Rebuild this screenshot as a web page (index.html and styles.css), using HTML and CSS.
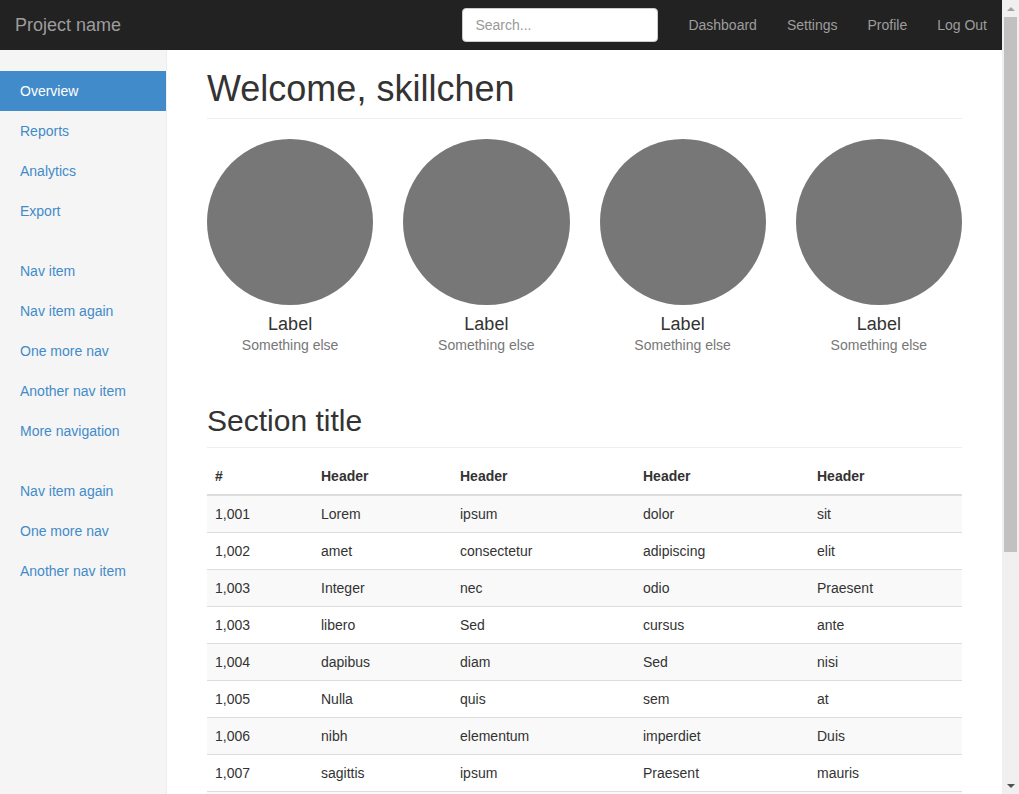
FILE: index.html
```html
<!DOCTYPE html>
<html lang="en">
<head>
<meta charset="utf-8">
<title>Dashboard</title>
<link rel="stylesheet" href="styles.css">
</head>
<body>
<div class="viewport">
<div class="page">
<header class="navbar">
  <a class="brand" href="#">Project name</a>
  <div class="spacer"></div>
  <form class="search-form"><input class="search" type="text" placeholder="Search..."></form>
  <nav class="topnav">
    <a href="#">Dashboard</a>
    <a href="#">Settings</a>
    <a href="#">Profile</a>
    <a href="#">Log Out</a>
  </nav>
</header>
<div class="layout">
  <aside class="sidebar">
    <ul class="side-nav">
      <li class="active"><a href="#">Overview</a></li>
      <li><a href="#">Reports</a></li>
      <li><a href="#">Analytics</a></li>
      <li><a href="#">Export</a></li>
    </ul>
    <ul class="side-nav">
      <li><a href="#">Nav item</a></li>
      <li><a href="#">Nav item again</a></li>
      <li><a href="#">One more nav</a></li>
      <li><a href="#">Another nav item</a></li>
      <li><a href="#">More navigation</a></li>
    </ul>
    <ul class="side-nav">
      <li><a href="#">Nav item again</a></li>
      <li><a href="#">One more nav</a></li>
      <li><a href="#">Another nav item</a></li>
    </ul>
  </aside>
  <main class="main">
    <h1 class="page-header">Welcome, skillchen</h1>
    <div class="placeholders">
      <div class="placeholder"><div class="circle"></div><h4>Label</h4><span class="muted">Something else</span></div>
      <div class="placeholder"><div class="circle"></div><h4>Label</h4><span class="muted">Something else</span></div>
      <div class="placeholder"><div class="circle"></div><h4>Label</h4><span class="muted">Something else</span></div>
      <div class="placeholder"><div class="circle"></div><h4>Label</h4><span class="muted">Something else</span></div>
    </div>
    <h2 class="sub-header">Section title</h2>
    <table class="table">
      <thead>
        <tr><th class="c1">#</th><th class="c2">Header</th><th class="c3">Header</th><th class="c4">Header</th><th class="c5">Header</th></tr>
      </thead>
      <tbody>
        <tr><td>1,001</td><td>Lorem</td><td>ipsum</td><td>dolor</td><td>sit</td></tr>
        <tr><td>1,002</td><td>amet</td><td>consectetur</td><td>adipiscing</td><td>elit</td></tr>
        <tr><td>1,003</td><td>Integer</td><td>nec</td><td>odio</td><td>Praesent</td></tr>
        <tr><td>1,003</td><td>libero</td><td>Sed</td><td>cursus</td><td>ante</td></tr>
        <tr><td>1,004</td><td>dapibus</td><td>diam</td><td>Sed</td><td>nisi</td></tr>
        <tr><td>1,005</td><td>Nulla</td><td>quis</td><td>sem</td><td>at</td></tr>
        <tr><td>1,006</td><td>nibh</td><td>elementum</td><td>imperdiet</td><td>Duis</td></tr>
        <tr><td>1,007</td><td>sagittis</td><td>ipsum</td><td>Praesent</td><td>mauris</td></tr>
        <tr class="empty"><td></td><td></td><td></td><td></td><td></td></tr>
      </tbody>
    </table>
  </main>
</div>
</div>
<div class="scrollbar">
  <div class="sb-arrow sb-up"></div>
  <div class="sb-track"><div class="sb-thumb"></div></div>
  <div class="sb-arrow sb-down"></div>
</div>
</div>
</body>
</html>
```
FILE: styles.css
```css
* { box-sizing: border-box; }
html, body { margin: 0; padding: 0; }
body {
  font-family: "Liberation Sans", Arial, sans-serif;
  font-size: 14px;
  line-height: 20px;
  color: #333;
  background: #fff;
  overflow: hidden;
}
a { text-decoration: none; }

.viewport {
  display: flex;
  height: 794px;
  overflow: hidden;
}
.page {
  flex: 1;
  min-width: 0;
  height: 794px;
  overflow: hidden;
  display: flex;
  flex-direction: column;
}

.navbar {
  height: 50px;
  flex: none;
  background: #222;
  display: flex;
  align-items: flex-start;
}
.brand {
  display: block;
  padding: 15px 15px;
  font-size: 18px;
  line-height: 20px;
  color: #9d9d9d;
}
.spacer { flex: 1; }
.search-form { margin: 8px 15px 0 0; }
.search {
  display: block;
  width: 196px;
  height: 34px;
  padding: 6px 12px;
  font-family: "Liberation Sans", Arial, sans-serif;
  font-size: 14px;
  color: #555;
  background: #fff;
  border: 1px solid #ccc;
  border-radius: 4px;
  outline: none;
}
.search::placeholder { color: #999; }
.topnav { display: flex; }
.topnav a {
  display: block;
  padding: 15px 15px;
  line-height: 20px;
  color: #9d9d9d;
}

.layout {
  flex: 1;
  display: flex;
  align-items: stretch;
  min-height: 0;
}
.sidebar {
  width: 167px;
  flex: none;
  background: #f5f5f5;
  border-right: 1px solid #eee;
  padding: 21px 0 0;
}
.side-nav {
  list-style: none;
  margin: 0 0 20px;
  padding: 0;
}
.side-nav a {
  display: block;
  padding: 10px 20px;
  line-height: 20px;
  color: #428bca;
}
.side-nav .active a {
  background: #428bca;
  color: #fff;
}

.main {
  flex: 1;
  min-width: 0;
  padding: 19px 40px 0 40px;
}
.page-header {
  margin: 0 0 20px;
  padding-bottom: 9px;
  font-size: 36px;
  font-weight: 500;
  line-height: 1.1;
  border-bottom: 1px solid #eee;
}
.placeholders {
  display: grid;
  grid-template-columns: repeat(4, 1fr);
  column-gap: 30px;
  margin-bottom: 29px;
  text-align: center;
}
.placeholder { padding-bottom: 20px; }
.circle {
  width: 100%;
  aspect-ratio: 1 / 1;
  border-radius: 50%;
  background: #777;
}
.placeholder h4 {
  margin: 10px 0 0;
  font-size: 18px;
  font-weight: 500;
  line-height: 1.1;
}
.muted { color: #777; display: block; }

.sub-header {
  margin: 20px 0 10px;
  padding-bottom: 10px;
  font-size: 30px;
  font-weight: 500;
  line-height: 1.1;
  border-bottom: 1px solid #eee;
}
.table {
  width: 100%;
  border-collapse: collapse;
  border-spacing: 0;
  margin-bottom: 20px;
}
.table th, .table td {
  padding: 8px;
  line-height: 20px;
  text-align: left;
  vertical-align: top;
}
.table th {
  font-weight: bold;
  border-bottom: 2px solid #ddd;
}
.table td { border-top: 1px solid #ddd; }
.table tbody tr:first-child td { border-top: 0; }
.table tbody tr:nth-child(odd) { background: #f9f9f9; }
.table tr.empty td { height: 36px; }
.c1 { width: 106px; }
.c2 { width: 139px; }
.c3 { width: 183px; }
.c4 { width: 174px; }
.c5 { width: 153px; }

.scrollbar {
  width: 17px;
  flex: none;
  height: 794px;
  background: #f0f0f0;
  display: flex;
  flex-direction: column;
}
.sb-arrow {
  height: 17px;
  flex: none;
  display: flex;
  align-items: center;
  justify-content: center;
}
.sb-up::before, .sb-down::before {
  content: "";
  width: 0;
  height: 0;
  border-left: 4px solid transparent;
  border-right: 4px solid transparent;
}
.sb-up::before { border-bottom: 4px solid #a3a3a3; }
.sb-down::before { border-top: 4px solid #505050; }
.sb-track { flex: 1; padding: 0 2px; }
.sb-thumb {
  height: 535px;
  background: #c1c1c1;
}
```
